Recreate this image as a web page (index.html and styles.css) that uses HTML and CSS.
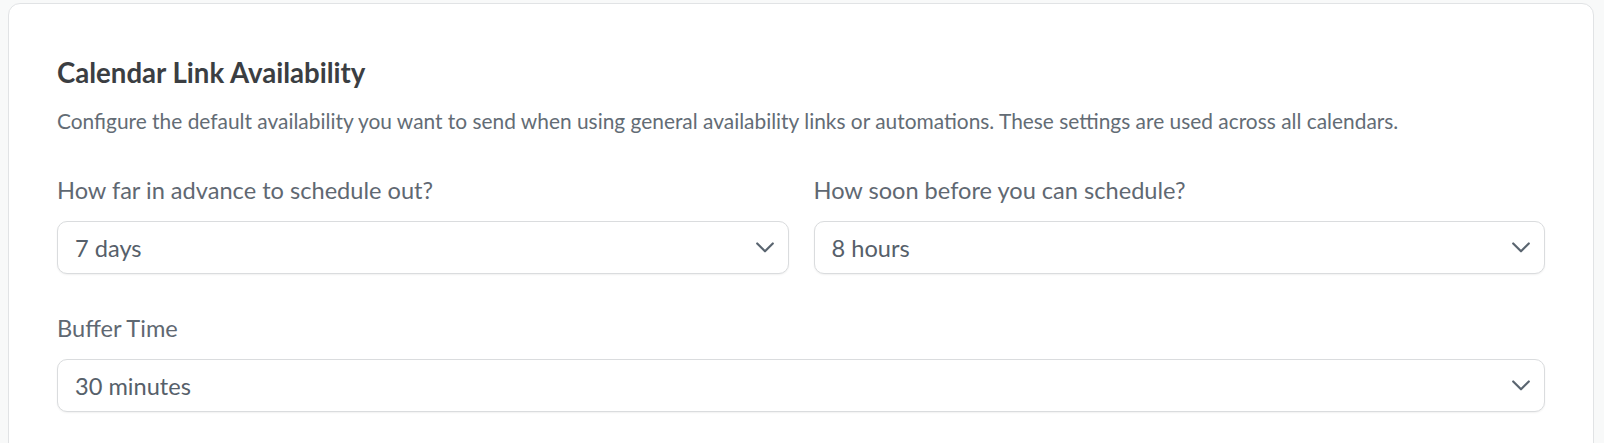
FILE: index.html
```html
<!DOCTYPE html>
<html lang="en">
<head>
<meta charset="utf-8">
<title>Calendar Link Availability</title>
<link rel="stylesheet" href="styles.css">
</head>
<body>
<div class="card">
  <h2 class="title">Calendar Link Availability</h2>
  <p class="desc">Configure the default availability you want to send when using general availability links or automations. These settings are used across all calendars.</p>
  <div class="row">
    <div class="field">
      <div class="label">How far in advance to schedule out?</div>
      <div class="select"><span class="value">7 days</span><svg class="chev" viewBox="0 0 18 11" width="18" height="11"><polyline points="1.2,1.5 9,9.3 16.8,1.5" fill="none" stroke="#5a6570" stroke-width="2.2" stroke-linecap="round" stroke-linejoin="round"/></svg></div>
    </div>
    <div class="field">
      <div class="label">How soon before you can schedule?</div>
      <div class="select"><span class="value">8 hours</span><svg class="chev" viewBox="0 0 18 11" width="18" height="11"><polyline points="1.2,1.5 9,9.3 16.8,1.5" fill="none" stroke="#5a6570" stroke-width="2.2" stroke-linecap="round" stroke-linejoin="round"/></svg></div>
    </div>
  </div>
  <div class="field full">
    <div class="label">Buffer Time</div>
    <div class="select"><span class="value">30 minutes</span><svg class="chev" viewBox="0 0 18 11" width="18" height="11"><polyline points="1.2,1.5 9,9.3 16.8,1.5" fill="none" stroke="#5a6570" stroke-width="2.2" stroke-linecap="round" stroke-linejoin="round"/></svg></div>
  </div>
</div>
</body>
</html>
```
FILE: styles.css
```css
html, body {
  margin: 0;
  padding: 0;
}
body {
  background: #f8f9f9;
  font-family: Lato, "Open Sans", sans-serif;
  padding: 3px 10px 0 8px;
  overflow: hidden;
  height: 443px;
  box-sizing: border-box;
}
.card {
  background: #ffffff;
  border: 1px solid #e1e3e5;
  border-radius: 12px;
  padding: 52px 48px 0 48px;
  height: 520px;
  box-sizing: border-box;
}
.title {
  margin: 0;
  font-size: 27.6px;
  line-height: 34px;
  font-weight: 700;
  color: #3b3e42;
}
.desc {
  margin: 17px 0 0 0;
  font-size: 20.9px;
  line-height: 28px;
  color: #636c75;
}
.row {
  display: grid;
  grid-template-columns: 1fr 1fr;
  gap: 25px;
  margin-top: 40px;
}
.field.full {
  margin-top: 39px;
}
.label {
  font-size: 23.6px;
  line-height: 30px;
  color: #5f6872;
  margin-bottom: 16px;
}
.select {
  height: 53px;
  box-sizing: border-box;
  border: 1px solid #dadcde;
  border-radius: 10px;
  box-shadow: 0 1px 2px rgba(0, 0, 0, 0.06);
  display: flex;
  align-items: center;
  justify-content: space-between;
  padding: 0 14px 0 17px;
  background: #fff;
}
.value {
  font-size: 23.6px;
  color: #56606a;
}
.chev {
  display: block;
}
```
